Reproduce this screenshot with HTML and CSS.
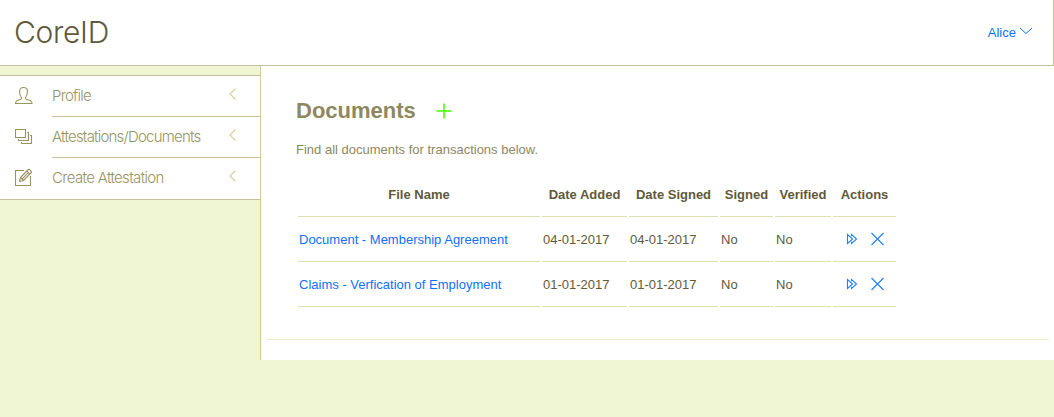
FILE: index.html
```html
<!DOCTYPE html>
<html lang="en">
<head>
<meta charset="utf-8">
<title>CoreID</title>
<link rel="stylesheet" href="styles.css">
</head>
<body>
<svg class="defs" width="0" height="0">
  <symbol id="back" viewBox="0 0 8 12"><path d="M6.500 .5 1 6l5.500 5.500"/></symbol>
  <symbol id="forward" viewBox="0 0 12 12"><path d="M1.500 1.500v9L6.500 6zM5.500 3.200V1.500L10.500 6l-5 4.500V8.800"/></symbol>
  <symbol id="remove" viewBox="0 0 14 14"><path d="m.5 1 12 12M12.500 1 .5 13"/></symbol>
</svg>
<header class="topbar">
  <h1 class="brand">CoreID</h1>
  <a class="user">Alice <svg class="chevron" width="14" height="8"><path d="m1 1 6 5.500L13 1"/></svg></a>
</header>
<div class="layout">
  <nav class="sidebar">
    <ul class="menu">
      <li class="menu-item">
        <svg class="menu-icon" width="18" height="18"><path d="M6.700 12C5.500 10.500 4.500 9 4.500 5.500 4.500 3 6 1.500 8.500 1.500s4 1.500 4 4c0 3.500-1 5-2.200 6.500 0 1.300.9 1.500 3.200 2 2.500.6 3.500 1.300 3.500 3.500H.5c0-2.200 1-2.900 3.500-3.500 2-.5 2.700-.7 2.700-2z"/></svg>
        <span class="menu-text">Profile</span><svg class="back" width="8" height="12"><use href="#back"/></svg>
      </li>
      <li class="menu-item">
        <svg class="menu-icon" width="18" height="18"><path d="M.5 2.500h10v8H.5zM3.500 12v1.500h10v-8H12M6.500 15v1.500h10v-8H15"/></svg>
        <span class="menu-text">Attestations/Documents</span><svg class="back" width="8" height="12"><use href="#back"/></svg>
      </li>
      <li class="menu-item">
        <svg class="menu-icon" width="18" height="18"><path d="M9 2.500H.5v15h15V8M4.500 13.500l1-4 7.700-8q.6-.6 1.200 0l1.900 1.800q.6.600 0 1.200l-7.800 8zM11.800 3l3 2.800M5.500 9.500l3 3M7.500 10.700l5.700-6"/></svg>
        <span class="menu-text">Create Attestation</span><svg class="back" width="8" height="12"><use href="#back"/></svg>
      </li>
    </ul>
  </nav>
  <main class="content">
    <section class="documents">
      <div class="heading">
        <h2 class="title">Documents</h2>
        <svg class="add" width="16" height="16"><path d="M8 .5v15M.5 8h15"/></svg>
      </div>
      <p class="intro">Find all documents for transactions below.</p>
      <table class="files">
        <colgroup><col class="c-name"><col class="c-added"><col class="c-date"><col class="c-signed"><col class="c-verified"><col class="c-actions"></colgroup>
        <thead><tr><th>File Name</th><th>Date Added</th><th>Date Signed</th><th>Signed</th><th>Verified</th><th>Actions</th></tr></thead>
        <tbody>
          <tr><td><a>Document - Membership Agreement</a></td><td>04-01-2017</td><td>04-01-2017</td><td>No</td><td>No</td>
            <td><div class="actions"><svg width="12" height="12"><use href="#forward"/></svg><svg width="14" height="14"><use href="#remove"/></svg></div></td></tr>
          <tr><td><a>Claims - Verfication of Employment</a></td><td>01-01-2017</td><td>01-01-2017</td><td>No</td><td>No</td>
            <td><div class="actions"><svg width="12" height="12"><use href="#forward"/></svg><svg width="14" height="14"><use href="#remove"/></svg></div></td></tr>
        </tbody>
      </table>
    </section>
    <hr class="rule">
  </main>
</div>
</body>
</html>
```
FILE: styles.css
```css
* { box-sizing: border-box; }
body { margin: 0; background: #f0f5d3; color: #5f5a3a; font: 13px/15px "Liberation Sans", Arial, sans-serif; }
svg { display: block; fill: none; stroke: currentColor; stroke-width: 1.1; flex: none; }
.defs { display: none; }
a { color: #1070ff; }
.topbar { height: 66px; display: flex; align-items: center; justify-content: space-between; padding: 0 20px 0 14px; background: #fff; border: solid #c9c09c; border-width: 0 1px 1px 0; }
.brand { margin: -1px 0 0; font: 300 30px/36px Inter, sans-serif; letter-spacing: -.3px; }
.user { display: flex; align-items: center; gap: 3px; }
.chevron { margin-top: -3px; stroke-width: 1; }
.layout { display: flex; }
.sidebar { width: 260px; padding-top: 9px; }
.menu { list-style: none; margin: 0; padding: 0; background: #fff; border: solid #c9c09c; border-width: 1px 0; }
.menu-item { display: flex; height: 41px; padding-left: 15px; color: #98945f; }
.menu-icon { margin: 10px 19px 0 0; }
.menu-text { flex: 1; border-bottom: 1px solid #c9c09c; font: 300 15px/40px Inter, sans-serif; letter-spacing: -.79px; }
.menu-item:last-child .menu-text { letter-spacing: -.67px; }
.back { width: 31px; height: 41px; padding: 12px 23px 16px 0; border-bottom: 1px solid #c9c09c; color: #d2d295; }
.menu-item:last-child .menu-text, .menu-item:last-child .back { border-bottom-color: transparent; }
.content { flex: 1; height: 294px; background: #fff; border-left: 1px solid #d2cc9c; }
.documents { height: 273px; padding: 32px 0 0 35px; }
.heading { display: flex; align-items: center; gap: 20px; height: 26px; }
.title { margin: 0; color: #8d885f; font-size: 22px; line-height: 26px; }
.add { color: #42ff00; stroke-width: 1.5; }
.intro { margin: 18px 0 15px; color: #8d885f; }
.files { width: 602px; table-layout: fixed; border-spacing: 2px; }
.files th, .files td { height: 43px; padding: 0 1px 2px; border-bottom: 1px solid #dde0ae; white-space: nowrap; }
.c-name { width: 242px; }
.c-added { width: 85px; }
.c-date { width: 89px; }
.c-signed { width: 53px; }
.c-verified { width: 56px; }
.c-actions { width: 63px; }
.actions { display: flex; align-items: center; gap: 13px; padding-left: 12px; color: #2080ff; }
.rule { margin: 0 5px; border: 0; border-top: 1px solid #e9edca; }
```
